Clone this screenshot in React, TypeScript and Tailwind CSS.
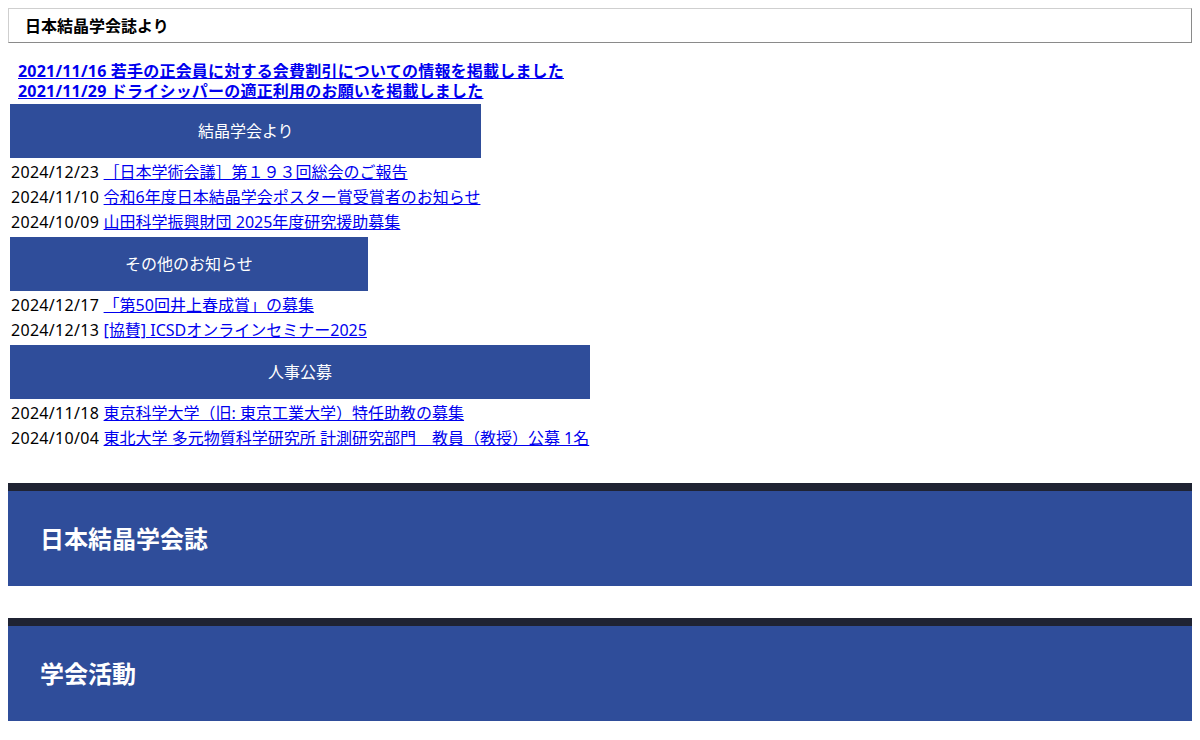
const font = {
  fontFamily: '"Noto Sans", "Noto Sans CJK JP", sans-serif',
};

type NewsItem = {
  date: string;
  title: string;
};

type NewsGroup = {
  heading: string;
  items: NewsItem[];
};

const groups: NewsGroup[] = [
  {
    heading: "結晶学会より",
    items: [
      { date: "2024/12/23", title: "［日本学術会議］第１９３回総会のご報告" },
      { date: "2024/11/10", title: "令和6年度日本結晶学会ポスター賞受賞者のお知らせ" },
      { date: "2024/10/09", title: "山田科学振興財団 2025年度研究援助募集" },
    ],
  },
  {
    heading: "その他のお知らせ",
    items: [
      { date: "2024/12/17", title: "「第50回井上春成賞」の募集" },
      { date: "2024/12/13", title: "[協賛] ICSDオンラインセミナー2025" },
    ],
  },
  {
    heading: "人事公募",
    items: [
      { date: "2024/11/18", title: "東京科学大学（旧: 東京工業大学）特任助教の募集" },
      { date: "2024/10/04", title: "東北大学 多元物質科学研究所 計測研究部門　教員（教授）公募 1名" },
    ],
  },
];

const notices = [
  "2021/11/16 若手の正会員に対する会費割引についての情報を掲載しました",
  "2021/11/29 ドライシッパーの適正利用のお願いを掲載しました",
];

function NewsTable({ group }: { group: NewsGroup }) {
  return (
    <div className="flex w-fit flex-col gap-[2px] p-[2px]">
      <div className="flex h-[54px] items-center justify-center bg-[#2f4d9a] text-[16px] text-white">
        {group.heading}
      </div>
      {group.items.map((item) => (
        <div
          className="h-[23px] whitespace-nowrap px-[1px] pt-[1px] text-[16px] leading-[23px] text-black"
          key={item.date + item.title}
        >
          <span className="tracking-[0.3px]">{item.date} </span>
          <a className="text-[#0000ee] underline" href="#">
            {item.title}
          </a>
        </div>
      ))}
    </div>
  );
}

function SectionBand({ title }: { title: string }) {
  return (
    <div className="border-t-[8px] border-[#1f2333] bg-[#2f4d9a]">
      <h2 className="flex h-[95px] items-center pl-[32px] text-[24px] font-bold text-white">
        {title}
      </h2>
    </div>
  );
}

export default function App() {
  return (
    <div className="min-h-[740px] bg-white p-2" style={font}>
      <div className="flex h-[35px] items-center border border-t-[#cfcfcf] border-l-[#cfcfcf] border-b-[#8a8a8a] border-r-[#8a8a8a] pl-[16px] text-[16px] font-bold text-black">
        日本結晶学会誌より
      </div>

      <div className="mt-[18px] flex flex-col pl-[10px]">
        {notices.map((notice) => (
          <a
            className="w-fit text-[16px] font-bold leading-[20px] tracking-[0.2px] text-[#0000ee] underline"
            href="#"
            key={notice}
          >
            {notice}
          </a>
        ))}
      </div>

      <div className="mt-[1px] flex flex-col">
        {groups.map((group) => (
          <NewsTable group={group} key={group.heading} />
        ))}
      </div>

      <div className="mt-[32px] flex flex-col gap-[32px]">
        <SectionBand title="日本結晶学会誌" />
        <SectionBand title="学会活動" />
      </div>
    </div>
  );
}
